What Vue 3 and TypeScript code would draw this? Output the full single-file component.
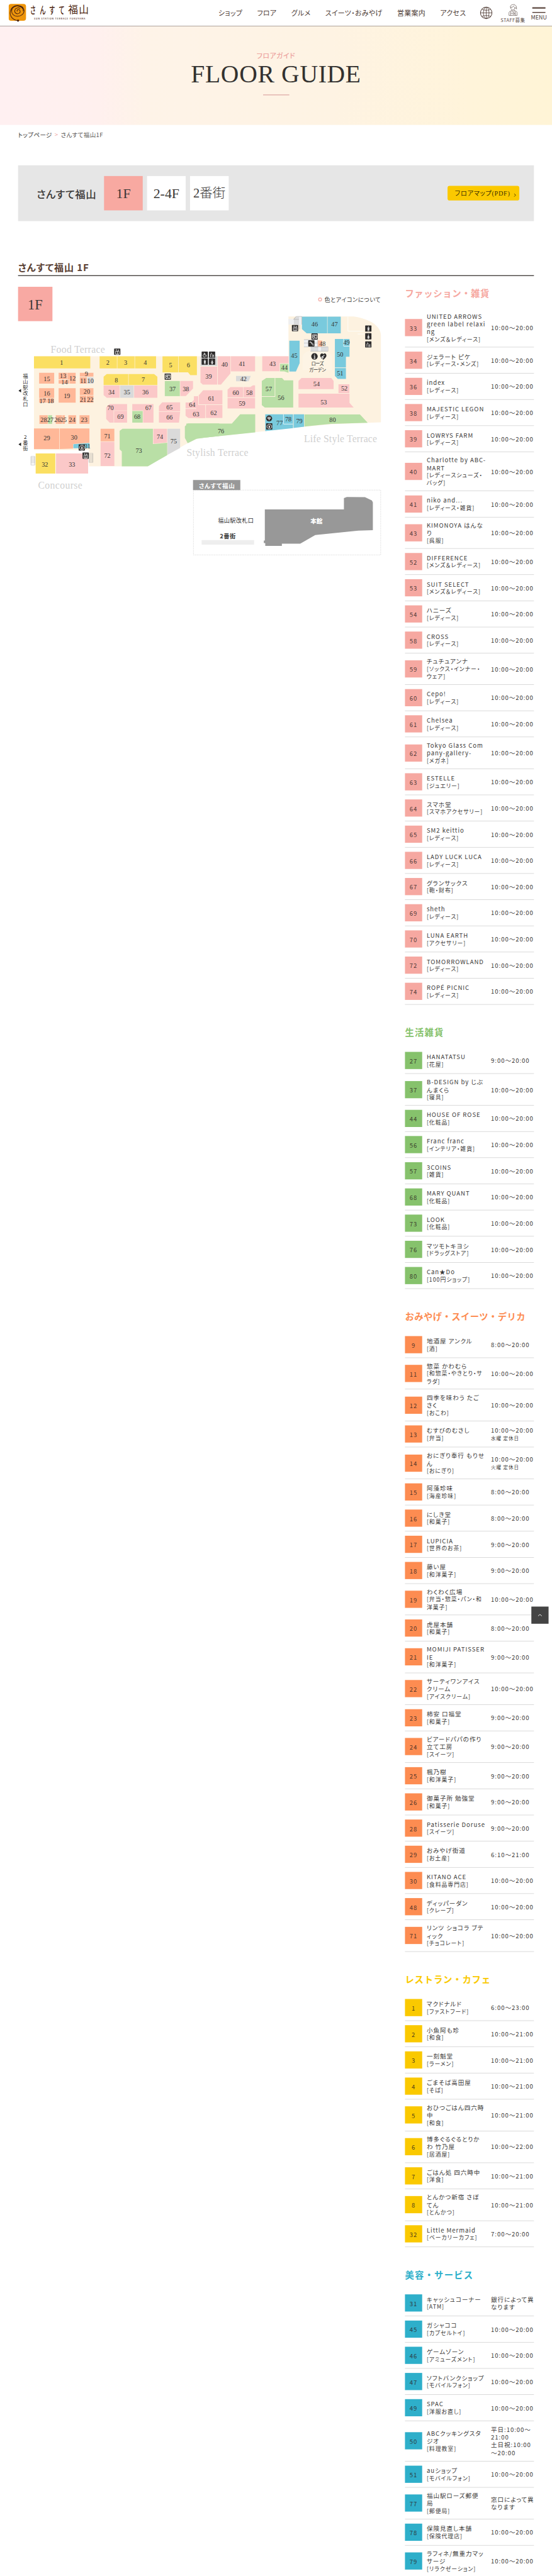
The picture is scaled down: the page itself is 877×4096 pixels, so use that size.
<script setup lang="ts">
type Shop = { no: number; name: string[]; cat: string[]; hours?: string[]; note?: string; h?: number }
type Section = { key: string; title: string; shops: Shop[] }
type Area = [string, string]
type Label = [number, number, number]

const day = '10:00〜20:00'
const s = (no: number, name: string, cat: string, hours = day, h = 61, note = ''): Shop => ({
  no, name: name.split('|'), cat: cat.split('|'), hours: hours.split('|'), h, note,
})

const navItems = ['ショップ', 'フロア', 'グルメ', 'スイーツ・おみやげ', '営業案内', 'アクセス']

const sections: Section[] = [
  { key: 'fashion', title: 'ファッション・雑貨', shops: [
    s(33, 'UNITED ARROWS|green label relaxi|ng', '[メンズ＆レディース]', day, 91),
    s(34, 'ジェラート ピケ', '[レディース・メンズ]'),
    s(36, 'index', '[レディース]'),
    s(38, 'MAJESTIC LEGON', '[レディース]'),
    s(39, 'LOWRYS FARM', '[レディース]'),
    s(40, 'Charlotte by ABC-|MART', '[レディースシューズ・|バッグ]', day, 91),
    s(41, 'niko and...', '[レディース・雑貨]'),
    s(43, 'KIMONOYA はんな|り', '[呉服]', day, 73),
    s(52, 'DIFFERENCE', '[メンズ＆レディース]'),
    s(53, 'SUIT SELECT', '[メンズ＆レディース]'),
    s(54, 'ハニーズ', '[レディース]'),
    s(58, 'CROSS', '[レディース]'),
    s(59, 'チュチュアンナ', '[ソックス・インナー・|ウェア]', day, 73),
    s(60, 'Cepo!', '[レディース]'),
    s(61, 'Chelsea', '[レディース]'),
    s(62, 'Tokyo Glass Com|pany-gallery-', '[メガネ]', day, 74),
    s(63, 'ESTELLE', '[ジュエリー]'),
    s(64, 'スマホ堂', '[スマホアクセサリー]'),
    s(65, 'SM2 keittio', '[レディース]'),
    s(66, 'LADY LUCK LUCA', '[レディース]'),
    s(67, 'グランサックス', '[鞄・財布]'),
    s(69, 'sheth', '[レディース]'),
    s(70, 'LUNA EARTH', '[アクセサリー]'),
    s(72, 'TOMORROWLAND', '[レディース]'),
    s(74, 'ROPÉ PICNIC', '[レディース]'),
  ] },
  { key: 'life', title: '生活雑貨', shops: [
    s(27, 'HANATATSU', '[花屋]', '9:00〜20:00'),
    s(37, 'B-DESIGN by じぶ|んまくら', '[寝具]', day, 74),
    s(44, 'HOUSE OF ROSE', '[化粧品]'),
    s(56, 'Franc franc', '[インテリア・雑貨]'),
    s(57, '3COINS', '[雑貨]'),
    s(68, 'MARY QUANT', '[化粧品]'),
    s(73, 'LOOK', '[化粧品]'),
    s(76, 'マツモトキヨシ', '[ドラッグストア]'),
    s(80, 'Can★Do', '[100円ショップ]'),
  ] },
  { key: 'sweets', title: 'おみやげ・スイーツ・デリカ', shops: [
    s(9, '地酒屋 アンクル', '[酒]', '8:00〜20:00'),
    s(11, '惣菜 かわむら', '[和惣菜・やきとり・サ|ラダ]', day, 73),
    s(12, '四季を味わう たご|さく', '[おこわ]', day, 74),
    s(13, 'むすびのむさし', '[弁当]', day, 61, '水曜 定休日'),
    s(14, 'おにぎり奉行 もりせ|ん', '[おにぎり]', day, 74, '火曜 定休日'),
    s(15, '阿藻珍味', '[海産珍味]', '8:00〜20:00'),
    s(16, 'にしき堂', '[和菓子]', '8:00〜20:00'),
    s(17, 'LUPICIA', '[世界のお茶]', '9:00〜20:00'),
    s(18, '藤い屋', '[和洋菓子]', '9:00〜20:00'),
    s(19, 'わくわく広場', '[弁当・惣菜・パン・和|洋菓子]', day, 73),
    s(20, '虎屋本舗', '[和菓子]', '8:00〜20:00'),
    s(21, 'MOMIJI PATISSER|IE', '[和洋菓子]', '9:00〜20:00', 73.5),
    s(22, 'サーティワンアイス|クリーム', '[アイスクリーム]', day, 74),
    s(23, '柿安 口福堂', '[和菓子]', '9:00〜20:00'),
    s(24, 'ビアードパパの作り|立て工房', '[スイーツ]', '9:00〜20:00', 74),
    s(25, '楓乃樹', '[和洋菓子]', '9:00〜20:00'),
    s(26, '御菓子所 勉強堂', '[和菓子]', '9:00〜20:00'),
    s(28, 'Patisserie Doruse', '[スイーツ]', '9:00〜20:00'),
    s(29, 'おみやげ街道', '[お土産]', '6:10〜21:00'),
    s(30, 'KITANO ACE', '[食料品専門店]'),
    s(48, 'ディッパーダン', '[クレープ]'),
    s(71, 'リンツ ショコラ ブテ|ィック', '[チョコレート]', day, 74),
  ] },
  { key: 'food', title: 'レストラン・カフェ', shops: [
    s(1, 'マクドナルド', '[ファストフード]', '6:00〜23:00'),
    s(2, '小魚阿も珍', '[和食]', '10:00〜21:00'),
    s(3, '一刻魁堂', '[ラーメン]', '10:00〜21:00'),
    s(4, 'ごまそば高田屋', '[そば]', '10:00〜21:00'),
    s(5, 'おひつごはん四六時|中', '[和食]', '10:00〜21:00', 74),
    s(6, '博多ぐるぐるとりか|わ 竹乃屋', '[居酒屋]', '10:00〜22:00', 74),
    s(7, 'ごはん処 四六時中', '[洋食]', '10:00〜21:00'),
    s(8, 'とんかつ新宿 さぼ|てん', '[とんかつ]', '10:00〜21:00', 74),
    s(32, 'Little Mermaid', '[ベーカリーカフェ]', '7:00〜20:00'),
  ] },
  { key: 'beauty', title: '美容・サービス', shops: [
    s(31, 'キャッシュコーナー', '[ATM]', '銀行によって異|なります'),
    s(45, 'ガシャココ', '[カプセルトイ]'),
    s(46, 'ゲームゾーン', '[アミューズメント]'),
    s(47, 'ソフトバンクショップ', '[モバイルフォン]'),
    s(49, 'SPAC', '[洋服お直し]'),
    s(50, 'ABCクッキングスタ|ジオ', '[料理教室]', '平日:10:00〜|21:00|土日祝:10:00|〜20:00', 94),
    s(51, 'auショップ', '[モバイルフォン]'),
    s(77, '福山駅ローズ郵便|局', '[郵便局]', '窓口によって異|なります', 74),
    s(78, '保険見直し本舗', '[保険代理店]'),
    s(79, 'ラフィネ/無重力マッ|サージ', '[リラクゼーション]', day, 74),
  ] },
]

/* West wing: drawn on a grid three times finer than the page. */
const west: Area[] = [
  ['y', '147,540 540,540 540,624 147,624'],
  ['y', '605,540 726,540 726,624 605,624'], ['y', '729,540 849,540 849,624 729,624'], ['y', '852,540 999,540 999,624 852,624'],
  ['y', '1044,540 1153,540 1153,652 1044,652'], ['y', '1156,540 1284,540 1284,671 1238,671 1222,652 1156,652'],
  ['o', '183,655 288,655 288,731 183,731'],
  ['o', '319,655 378,655 378,700 319,700'], ['o', '381,655 438,655 438,731 396,731 396,702 381,702'], ['o', '319,705 393,705 393,731 319,731'],
  ['o', '467,655 562,655 562,681 467,681'], ['o', '467,686 516,686 516,731 467,731'], ['g', '519,686 562,686 562,731 519,731'],
  ['o', '183,762 288,762 288,831 183,831'], ['o', '183,834 235,834 235,864 183,864'], ['o', '238,834 288,834 288,864 238,864'],
  ['o', '319,762 438,762 438,864 319,864'],
  ['o', '467,762 562,762 562,811 467,811'], ['o', '467,814 513,814 513,864 467,864'], ['o', '516,814 562,814 562,864 516,864'],
  ['o', '185,952 243,952 243,1012 185,1012'], ['n', '246,952 274,952 274,1012 246,1012'],
  ['o', '299,952 343,952 343,1012 299,1012'], ['o', '346,952 363,952 363,1012 346,1012'],
  ['o', '387,952 441,952 441,1012 387,1012'], ['o', '465,952 534,952 534,1012 465,1012'],
  ['o', '147,1044 324,1044 324,1188 147,1188'], ['o', '327,1044 534,1044 534,1144 420,1152 420,1184 327,1188'],
  ['b', '422,1154 534,1146 534,1181 422,1182'],
  ['y', '159,1219 296,1219 296,1359 159,1359'], ['p', '300,1219 525,1219 525,1359 300,1359'],
  ['y', '633,682 655,664 805,664 805,741 633,741'], ['y', '808,664 985,664 1008,682 1008,741 808,741'],
  ['p', '633,744 745,744 745,829 655,829 633,811'], ['g', '748,744 843,744 843,829 748,829'], ['p', '846,744 1008,744 1008,829 846,829'],
  ['n', '1060,712 1165,712 1165,818 1060,818'], ['p', '1168,712 1257,712 1257,765 1207,818 1168,818'],
  ['p', '651,897 673,873 797,873 797,918 703,918 703,1003 675,1003 651,978'], ['p', '706,921 797,921 797,1003 706,1003'],
  ['p', '833,873 981,873 981,1003 909,1003 909,919 833,919'], ['n', '833,922 906,922 906,1003 833,1003'],
  ['p', '1019,888 1042,861 1167,861 1167,925 1019,925'], ['p', '1019,928 1167,928 1159,1003 1019,1003'],
  ['p', '1205,862 1245,862 1293,815 1293,903 1205,903'], ['p', '1205,907 1342,907 1342,971 1225,971 1205,955'],
  ['o', '612,1046 708,1046 708,1134 612,1134'], ['p', '612,1137 708,1137 708,1306 612,1306'],
  ['n', '745,1060 765,1046 977,1046 977,1153 1077,1144 1077,1230 942,1308 760,1308 760,1204 745,1190'],
  ['p', '980,1046 1076,1046 1076,1141 980,1150'], ['g', '1079,1046 1167,1046 1167,1180 1079,1228'],
  ['n', '1200,1030 1222,1009 1440,1009 1440,1096 1345,1108 1281,1116 1220,1147 1200,1110'],
]
/* East wing, same width grid with a coarser height. */
const east: Area[] = [
  ['g', '19,318 136,318 136,374 19,374'], ['p', '19,377 136,377 136,480 35,480 19,468'], ['p', '140,318 228,318 228,416 162,480 140,480'],
  ['p', '231,318 400,318 400,404 231,404'], ['g', '267,430 370,430 355,461 267,461'],
  ['p', '450,318 634,318 634,358 571,358 571,403 450,403'], ['n', '574,361 633,361 633,412 603,404 574,404'],
  ['p', '8,540 38,512 172,512 172,593 8,593'], ['p', '-27,546 4,546 4,596 53,596 53,670 -10,670 -10,593 -27,593'], ['p', '57,596 172,596 172,670 57,670'],
  ['p', '208,508 228,494 317,494 317,552 208,552'], ['p', '320,494 366,494 385,484 400,484 400,552 320,552'], ['p', '208,556 400,556 400,616 208,616'],
  ['n', '-80,702 238,702 296,649 401,649 401,752 0,786 -80,796'],
  ['b', '639,229 711,229 711,358 685,405 639,405'], ['b', '727,92 903,92 903,187 760,187 727,163'], ['b', '906,92 998,92 998,187 906,187'],
  ['b', '957,219 1059,219 1059,321 1034,321 1034,382 957,382'], ['b', '957,385 1034,385 1034,447 977,447 957,430'],
  ['o', '838,228 868,228 868,264 838,264'],
  ['p', '703,459 724,442 932,442 948,459 948,506 703,506'], ['p', '982,478 1058,478 1058,528 982,528'],
  ['p', '703,532 1059,532 1059,584 1088,611 703,611'],
  ['n', '447,459 478,442 537,442 537,546 447,546'], ['n', '541,442 588,442 603,455 666,455 666,611 468,611 447,597 447,550 541,550'],
  ['b', '471,649 665,649 665,728 471,745'], ['b', '669,649 742,649 742,720 669,727'],
  ['n', '745,650 1132,650 1186,698 930,704 745,719'],
]
const westLabels: Label[] = [
  [1, 340, 586], [2, 662, 586], [3, 787, 586], [4, 924, 586], [5, 1101, 601], [6, 1225, 601], [15, 237, 698], [13, 350, 678], [12, 416, 693],
  [14, 360, 721], [9, 513, 661], [11, 491, 711], [10, 541, 711], [16, 237, 799], [17, 207, 852], [18, 263, 852], [19, 377, 816], [20, 516, 786],
  [21, 490, 844], [22, 540, 844], [28, 215, 984], [27, 261, 984], [26, 311, 984], [25, 354, 984], [24, 414, 984], [23, 497, 984], [29, 237, 1113],
  [30, 427, 1108], [31, 520, 1170], [32, 223, 1297], [33, 412, 1297], [8, 722, 705], [7, 910, 703], [34, 688, 790], [35, 796, 790], [36, 925, 790],
  [37, 1114, 769], [38, 1207, 769], [70, 681, 902], [69, 751, 963], [67, 946, 902], [68, 868, 961], [65, 1093, 898], [66, 1093, 966],
  [64, 1251, 877], [63, 1278, 942], [71, 659, 1096], [72, 659, 1236], [73, 879, 1198], [74, 1026, 1102], [75, 1122, 1131],
]
const eastLabels: Label[] = [
  [39, 76, 434], [40, 187, 366], [41, 309, 361], [42, 319, 447], [43, 522, 363], [44, 605, 383], [45, 673, 315], [46, 816, 136], [47, 954, 136],
  [48, 870, 246], [49, 1038, 239], [50, 993, 309], [51, 993, 415], [52, 1023, 503], [53, 879, 579], [54, 829, 475], [56, 581, 557], [57, 495, 505],
  [58, 360, 525], [59, 309, 587], [60, 265, 527], [61, 94, 559], [62, 111, 640], [76, 162, 746], [77, 571, 700], [78, 632, 677], [79, 709, 689], [80, 941, 680],
]
const labels = [
  ...westLabels.map(([n, x, y]) => ({ n, x: 30 + x / 3, y: 655 + y / 3 })),
  ...eastLabels.map(([n, x, y]) => ({ n, x: 460 + x / 3, y: 705 + y / 2.45 })),
]

const glyph: Record<string, string> = {
  lift: 'M3.5 6h8v7h-8zM7.500 6v7M5 4.500V2M4 3l1-1 1 1M10 2v2.500M9 3.500l1 1 1-1',
  man: 'M7.500 2v1.500M6 5h3v4H6zM6.500 9v4.500M8.500 9v4.500M7.500 5v6',
  woman: 'M7.500 2v1.500M7.500 5l-2 5h4zM6.800 10v3.500M8.200 10v3.500M7.500 6v4',
  wheel: 'M6 2.500v5h4l1.500 4M6 5h3M5 6.500a3.200 3.200 0 1 0 4.500 4',
  baby: 'M4.500 3h1.500M4 6l2.500-1 3 3M4 6v7M7 9.500h5M7 12h5.500M10.500 7.500h1.500',
  locker: 'M2.500 3h10v8h-10zM7.500 3v8M4.500 5.500h1.500v2H4.500zM9 5h2M4 11v2M11 11v2',
  esc: 'M2.500 4.500h3l5 7h2.500M4.500 3l8 6.500',
  yen: 'M7.500 2a5.500 5.500 0 1 0 .1 0zM5.500 4.500l2 3 2-3M7.500 7.500V11M5.700 8h3.600M5.700 9.600h3.600',
}
const icons: [string, number, number][] = [
  ['lift', 265.5, 812], ['lift', 192, 1054], ['lift', 679, 757], ['locker', 383, 870], ['locker', 724.5, 776.500],
  ['wheel', 469, 819], ['baby', 486, 819], ['man', 469, 835], ['woman', 486, 835], ['esc', 717, 792.500],
  ['man', 849.5, 758], ['woman', 849.5, 776], ['baby', 849.5, 795], ['yen', 183, 1035], ['yen', 619, 986],
]
</script>

<template>
  <div class="window">
    <div class="page">
      <header class="head">
        <svg class="logo" width="200" height="60" viewBox="0 0 200 60">
          <rect x="0" y="9" width="40.500" height="39.500" rx="6" fill="#ee950b" />
          <g fill="none" stroke="#4c2410" stroke-width="1.500">
            <path d="M22 48C9 47 2 37 4 27 6 17 14 12.500 21 13c9 .5 15.500 6 15 13-.5 7-8 12-15.500 12C13 38 7 33 7 25.500 7 18 14 13 21 14c8 1 14 5 13 12" />
            <path d="M27 20c-4-3.500-11-1.500-12.500 3.500C13 30 19 34 24.500 31c4-2.500 3-8-1.500-8.500-3-.3-4.500 2.500-2.500 4" />
            <path d="M10 18c6-6 18-6 24 0" />
          </g>
          <circle cx="22" cy="48" r="2.600" fill="#4c2410" />
          <g fill="#4c2410" class="logo-name">
            <text transform="translate(50 31.500) scale(.66 1.080)" x="0 34 67 101" y="0">さんすて</text>
            <text x="138.500 163.500" y="31" font-size="23" font-weight="400">福山</text>
            <text x="59" y="44.700" font-size="5.200" textLength="119">SUN STATION TERRACE FUKUYAMA</text>
          </g>
        </svg>
        <nav class="nav"><a v-for="n in navItems" :key="n">{{ n }}</a></nav>
        <svg class="globe" width="30" height="30" viewBox="0 0 30 30" fill="none" stroke="#513d36" stroke-width="1.200">
          <circle cx="15" cy="15" r="13.400" stroke-width="1.500" /><ellipse cx="15" cy="15" rx="6.500" ry="13.400" />
          <path d="M15 1.500v27M1.500 15h27M4.500 6.500c6 3.200 15 3.200 21 0M4.500 23.500c6-3.200 15-3.200 21 0" />
        </svg>
        <div class="staff">
          <svg width="22" height="28" viewBox="0 0 22 28" fill="none" stroke="#6b5c57" stroke-width="1.100">
            <path d="M5.500 9C4 4 8 1.500 11.500 2L14 1l2 2c3 1 4 5 3.500 9l-2-3c-1 1-2 1-3-1M6 8c4 0 7-1.500 8-4M6 8c0 4 2 6.500 5 6.500S15.500 12 15.500 8M9 14v3l2.500 2 2.500-2v-3M9 16c-5 .5-7 2.500-7 5v6h19v-6c0-2.500-2-4.500-7-5M6 18v9M17 18v9M6 22h3M11 21h4v3h-4z" />
          </svg>
          <span>STAFF募集</span>
        </div>
        <div class="menu"><i /><i /><span>MENU</span></div>
      </header>

      <section class="hero">
        <p>フロアガイド</p>
        <h1>FLOOR GUIDE</h1>
        <i />
      </section>

      <div class="crumbs"><span>トップページ</span><b>&gt;</b><span class="here">さんすて福山1F</span></div>

      <div class="floors">
        <strong>さんすて福山</strong>
        <a class="on">1F</a><a>2-4F</a><a class="kanji">2番街</a>
        <button type="button">フロアマップ(PDF)
          <svg width="6" height="9" viewBox="0 0 6 9" fill="none" stroke="#3d3000" stroke-width="1.300"><path d="M1 1l3.500 3.500L1 8" /></svg>
        </button>
      </div>

      <h2 class="title">さんすて福山 1F</h2>

      <main class="cols">
        <div class="left">
          <div class="lead">
            <div class="square">1F</div>
            <div class="about"><i /><span>色とアイコンについて</span></div>
          </div>
          <svg class="map" width="870" height="580" viewBox="30 730 870 580">
            <path class="ground" d="M79 830H671V737H823C850 741 884 754 886 779V983.500L770 988 682 996.500 617 1004 460 1021 437 1032 343 1086H207V1048H79Z" />
            <g transform="translate(30 650) scale(.33333)"><polygon v-for="(a, i) in west" :key="i" :class="a[0]" :points="a[1]" /></g>
            <g transform="translate(460 700) scale(.33333 .40816)">
              <polygon v-for="(a, i) in east" :key="i" :class="a[0]" :points="a[1]" />
              <g class="seam">
                <path d="M1048 92V175H1160M1115 191H1160M1018 219V261H1059M598 649V705H665" />
              </g>
            </g>
            <path fill="#fdf4e5" d="M704 832a34 18 0 0 1 68 0v30h-68z" />
            <g fill="#eeeff1"><path d="M671 743h14l5-6h12v20h-14v-1h-17zM707 791h32v17h-32zM722 807h41v11h-41z" /></g>
            <path class="steps" d="M683 744l6-7h13v19M685 740v16M688 738v18M691 738v18M694 738v30M697 757v10M683 744h12M707 791h32M707 799h32M707 808h32v-17M724 808v10M727 808v10M730 808v10M733 808v10M736 808v10M739 808v10M748 808v10M751 808v10M754 808v10M757 808v10M760 808v10M763 808v10M722 808h41M722 818h41" />
            <path class="steps" d="M72 1063h9v20h-9zM72 1066h9M72 1069h9M72 1072h9M72 1075h9M72 1078h9M207 1056h9v21h-9zM207 1059h9M207 1062h9M207 1065h9M207 1068h9M207 1071h9M207 1074h9" />
            <g v-for="([k, x, y], i) in icons" :key="'i' + i" :transform="`translate(${x} ${y})`">
              <rect width="14.500" height="14.500" rx="1" fill="#2e2c2c" />
              <path :d="glyph[k]" fill="none" stroke="#fff" stroke-width="1.200" />
            </g>
            <g fill="#2e2c2c"><circle cx="626" cy="974.500" r="7" /><circle cx="731.500" cy="830" r="7.500" /><path d="M752 838c-6-5-8-8-7-11.500 1.500-4 5.500-4 7-1 1.500-3 6-3 7 1 1 3.500-1 6.500-7 11.500z" /></g>
            <path fill="none" stroke="#fff" stroke-width="1.500" d="M622 972h8M622 975h8M626 975v4M731.500 825.500v1.500M730 829h2v5M729.500 834.500h4M750 836l2-4h-4l7-5" />
            <g class="nums"><text v-for="l in labels" :key="l.n" :x="l.x" :y="l.y">{{ l.n }}</text></g>
            <g class="zones">
              <text x="118" y="822" textLength="126">Food Terrace</text><text x="88.500" y="1138" textLength="103">Concourse</text>
              <text x="434" y="1062.500" textLength="143.500">Stylish Terrace</text><text x="707" y="1030" textLength="170">Life Style Terrace</text>
            </g>
            <g class="jp">
              <text x="724" y="851.500" font-size="11" textLength="29">ローズ</text><text x="719" y="865.500" font-size="11" textLength="39">ガーデン</text>
              <text v-for="(c, i) in '福山駅改札口'" :key="c" x="53" :y="881 + i * 13.100" font-size="12">{{ c }}</text>
              <text v-for="(c, i) in '2番街'" :key="c" x="59" text-anchor="middle" :y="1023 + i * 13.100" font-size="12">{{ c }}</text>
              <path fill="#222" d="M43 910l6-4v8zM43 1035l6-4v8z" />
            </g>
            <rect x="450" y="1141.500" width="435.500" height="151" fill="none" stroke="#c8c8c8" stroke-dasharray="2 2" />
            <rect x="449" y="1118" width="110" height="23.500" fill="#989898" />
            <g transform="translate(460 700) scale(.33333 .40816)" fill="#989898">
              <polygon points="468,1192 1020,1192 1020,1127 1040,1121 1167,1122 1215,1141 1222,1152 1222,1310 1120,1313 820,1338 715,1388 587,1388 587,1400 471,1400 471,1384 461,1384 461,1370 468,1370" />
            </g>
            <rect x="469" y="1258" width="122" height="10.500" fill="#eee" />
            <g class="jp">
              <text x="462.500" y="1136" font-size="14" font-weight="700" fill="#fff" textLength="83.500">さんすて福山</text>
              <text x="507" y="1218" font-size="13.500" textLength="83">福山駅改札口</text>
              <text x="511.500" y="1254.500" font-size="13.500" font-weight="700" textLength="36.500">2番街</text>
              <text x="722" y="1218.500" font-size="14" font-weight="900" fill="#fff">本館</text>
            </g>
          </svg>
        </div>

        <div class="lists">
          <section v-for="sec in sections" :key="sec.key" :class="sec.key">
            <h3>{{ sec.title }}</h3>
            <div v-for="shop in sec.shops" :key="shop.no" class="row" :style="{ height: shop.h + 'px' }">
              <span class="no">{{ shop.no }}</span>
              <div class="name">
                <div v-for="l in shop.name" :key="l">{{ l }}</div>
                <div v-for="l in shop.cat" :key="l" class="cat">{{ l }}</div>
              </div>
              <div class="hours">
                <div v-for="l in shop.hours" :key="l">{{ l }}</div>
                <small v-if="shop.note">{{ shop.note }}</small>
              </div>
            </div>
          </section>
        </div>
      </main>

      <div class="totop">
        <svg width="10" height="6" viewBox="0 0 10 6" fill="none" stroke="#fff" stroke-width="1.300"><path d="M.7 5L5 1.200 9.300 5" /></svg>
      </div>
    </div>
  </div>
</template>

<style>
body { margin: 0; background: #fff; }
</style>

<style scoped>
.window { width: 877px; height: 4096px; overflow: hidden; }
.page {
  position: relative; width: 1284px; height: 6000px; overflow: hidden; background: #fff;
  transform: scale(0.68302, 0.68267); transform-origin: 0 0;
  font-family: "Noto Sans CJK JP", "Noto Sans", sans-serif; font-feature-settings: "palt"; color: #3a3837;
}
.head { box-sizing: border-box; height: 61px; border-bottom: 1px solid #4a3a34; display: flex; align-items: center; padding-left: 20px; }
.logo { flex: none; margin-right: 288px; }
.logo-name { font-size: 21px; font-weight: 500; font-feature-settings: normal; }
.nav { display: flex; width: 576px; justify-content: space-between; font-size: 16px; letter-spacing: .5px; color: #4c3a34; white-space: nowrap; }
.globe { margin-left: 32px; }
.staff { width: 54px; margin-left: 20px; margin-top: 2px; display: flex; flex-direction: column; align-items: center; font-size: 11px; line-height: 14px; letter-spacing: .6px; color: #5b4a44; white-space: nowrap; }
.staff svg { margin-bottom: 2px; }
.menu { width: 35px; margin-left: 16px; margin-top: 5px; display: flex; flex-direction: column; align-items: center; font-size: 13px; line-height: 14px; color: #4c3a34; }
.menu i { width: 31px; height: 2.500px; margin-bottom: 8px; background: #5d4840; border-radius: 1px; }
.menu i + i { margin-bottom: 4px; }
.hero { height: 230px; background: linear-gradient(90deg, #fff0f1 0%, #fff0ee 18%, #fef3e8 26%, #fef3e3 60%, #fff4da 85%, #fff4d6 100%); display: flex; flex-direction: column; align-items: center; }
.hero p { margin: 56px 0 0; font-size: 16px; line-height: 24px; font-weight: 500; color: #eda5a2; letter-spacing: .6px; }
.hero h1 { margin: 0; height: 64px; font: 400 58px/64px "Liberation Serif", serif; color: #33312f; letter-spacing: 1px; }
.hero i { width: 61px; height: 2px; margin-top: 15px; background: #dfaeab; }
.crumbs { height: 94px; padding: 12px 42px 0; box-sizing: border-box; display: flex; font-size: 14px; line-height: 20px; letter-spacing: .5px; }
.crumbs b { font-weight: 400; color: #efa6a4; margin: 0 6px; }
.here { color: #5b5957; }
.floors { box-sizing: border-box; margin: 0 42px; height: 130px; padding: 0 34px 0 43px; background: #e6e6e6; display: flex; align-items: center; }
.floors strong { width: 147px; margin-right: 10px; font-size: 24px; font-weight: 500; letter-spacing: .6px; white-space: nowrap; }
.floors a { width: 90px; height: 80px; margin-right: 10px; background: #fff; text-align: center; font: 400 32px/80px "Liberation Serif", serif; white-space: nowrap; }
.floors a.kanji { font-family: "Liberation Serif", "Noto Sans CJK JP", serif; font-size: 30px; font-weight: 300; }
.floors a.on { background: #f8a9a1; }
.floors button { box-sizing: border-box; width: 167px; height: 34px; margin-left: auto; padding: 0 7px 0 17px; border: 0; border-radius: 5px; background: #fbc900; color: #3d3000; font: 400 15px/34px "Liberation Serif", "Noto Sans CJK JP", serif; letter-spacing: 1px; display: flex; align-items: center; justify-content: space-between; font-feature-settings: "palt"; white-space: nowrap; }
.floors svg { margin-top: 8px; }
.title { box-sizing: border-box; margin: 84px 42px 0; height: 44px; border-bottom: 2px solid #44403e; font-size: 22px; line-height: 45px; font-weight: 700; color: #5a4034; letter-spacing: 1.300px; }
.cols { display: flex; padding: 0 42px; justify-content: space-between; }
.left { width: 860px; }
.lead { display: flex; justify-content: space-between; padding-top: 25px; }
.square { width: 80px; height: 80px; background: #f8a9a3; text-align: center; font: 400 33px/82px "Liberation Serif", serif; }
.about { display: flex; align-items: center; height: 20px; margin: 19px 16px 0 0; font-size: 13.500px; letter-spacing: .7px; }
.about i { box-sizing: border-box; width: 9px; height: 9px; border: 2.500px solid #f5b3ac; border-radius: 50%; margin-right: 6px; }
.map { display: block; margin: -18px 0 0 -12px; }
.ground { fill: #fdf2e0; }
.y { fill: #fbdf62; } .o { fill: #ffb898; } .p { fill: #fbc8c8; } .n { fill: #b9dfa6; } .b { fill: #79cadd; } .g { fill: #dadada; }
.seam path { fill: none; stroke: #fff; stroke-width: 3; }
.steps { fill: none; stroke: #9b9b9b; stroke-width: .7; }
.nums { font: 15px "Liberation Serif", serif; text-anchor: middle; fill: #333; }
.zones { font: 23px "Liberation Serif", serif; fill: #d0d0d0; }
.jp { fill: #333; }
.lists { width: 300px; padding-top: 18px; }
.lists section { --tone: #f6a8a1; --track: .9px; margin-bottom: 43px; }
.lists .life { --tone: #86c26c; --track: 1.800px; }
.lists .sweets { --tone: #fd8c51; --track: .6px; }
.lists .food { --tone: #fac900; --track: 1.200px; }
.lists .beauty { --tone: #2eafca; --track: 1.800px; }
.lists h3 { margin: 0; height: 57px; font: 700 21px/46px "Liberation Serif", "Noto Sans CJK JP", serif; letter-spacing: var(--track); color: var(--tone); white-space: nowrap; }
.row { box-sizing: border-box; border-bottom: 1px solid #c9c9c9; display: flex; align-items: center; font-size: 14px; line-height: 18px; letter-spacing: 1.400px; white-space: nowrap; }
.no { width: 40px; height: 40px; flex: none; background: var(--tone); text-align: center; line-height: 42px; color: rgba(45, 35, 30, .86); }
.name { width: 150px; padding-left: 10.500px; box-sizing: border-box; flex: none; margin-right: 10px; }
.cat { font-size: 13px; }
.hours { font-size: 14px; }
.hours small { display: block; font-size: 11px; }
.totop { position: absolute; left: 1236px; top: 3742px; width: 40px; height: 40px; background: #444; display: flex; align-items: center; justify-content: center; }
</style>
